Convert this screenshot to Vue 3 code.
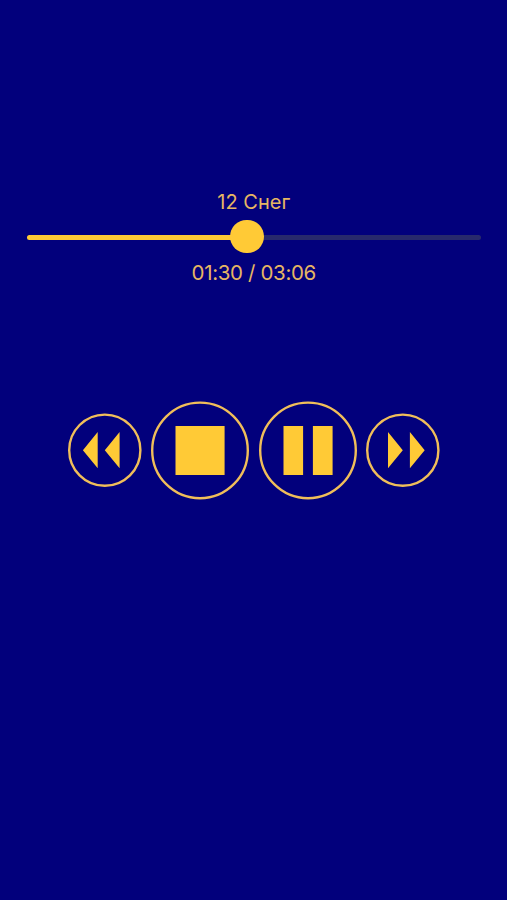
<script setup>
import { computed, ref } from 'vue'

const title = ref('12 Снег')
const elapsed = ref(90)
const duration = ref(186)
const progress = computed(() => (elapsed.value / duration.value) * 100)

const clock = (s) =>
  `${String(Math.floor(s / 60)).padStart(2, '0')}:${String(s % 60).padStart(2, '0')}`
</script>

<template>
  <main class="player">
    <div class="title">{{ title }}</div>
    <div class="slider">
      <div class="fill" :style="{ width: progress + '%' }">
        <span class="thumb"></span>
      </div>
    </div>
    <div class="time">{{ clock(elapsed) }} / {{ clock(duration) }}</div>

    <div class="controls">
      <button class="btn small" aria-label="Previous">
        <svg viewBox="0 -0.4 73.6 73.6">
          <circle cx="36.8" cy="36.8" r="35.6" />
          <path d="M14.9 36.8 29.7 18.7V54.9ZM36.8 36.8 51.6 18.7V54.9Z" />
        </svg>
      </button>
      <button class="btn" aria-label="Stop">
        <svg viewBox="0 -0.4 98 98">
          <circle cx="49" cy="49" r="47.8" />
          <path d="M24.5 24.5H73.6V73.6H24.5Z" />
        </svg>
      </button>
      <button class="btn" aria-label="Pause">
        <svg viewBox="0 -0.4 98 98">
          <circle cx="49" cy="49" r="47.8" />
          <path d="M24.5 24.5H44.1V73.6H24.5ZM53.9 24.5H73.6V73.6H53.9Z" />
        </svg>
      </button>
      <button class="btn small" aria-label="Next">
        <svg viewBox="0 -0.4 73.6 73.6">
          <circle cx="36.8" cy="36.8" r="35.6" />
          <path d="M36.8 36.8 22 18.7V54.9ZM58.7 36.8 43.9 18.7V54.9Z" />
        </svg>
      </button>
    </div>
  </main>
</template>

<style>
body {
  background: #02007c;
}
</style>

<style scoped>
.player {
  box-sizing: border-box;
  height: 900px;
  padding: 188px 26px 0 26.5px;
  background: #02007c;
  color: #e6b663;
  font-family: Inter, "Liberation Sans", sans-serif;
  font-size: 20px;
  line-height: 28px;
  text-align: center;
}
.slider {
  height: 5px;
  margin-top: 19px;
  border-radius: 3px;
  background: #28296c;
}
.fill {
  position: relative;
  height: 100%;
  border-radius: 3px;
  background: #ffca36;
}
.thumb {
  position: absolute;
  top: -15.2px;
  right: -17.4px;
  width: 33.4px;
  height: 33.4px;
  border-radius: 50%;
  background: #ffca36;
}
.time {
  margin-top: 19px;
  font-size: 20.5px;
  letter-spacing: -0.35px;
}
.controls {
  display: flex;
  justify-content: center;
  align-items: center;
  gap: 9.7px;
  margin-top: 114px;
}
.btn {
  flex: none;
  width: 98px;
  height: 98px;
  padding: 0;
  border: 0;
  background: none;
}
.btn.small {
  width: 73.6px;
  height: 73.6px;
}
.btn svg {
  display: block;
  width: 100%;
  height: 100%;
  overflow: visible;
}
.btn circle {
  fill: none;
  stroke: #f0be5a;
  stroke-width: 2.4;
}
.btn path {
  fill: #ffca36;
}
</style>
